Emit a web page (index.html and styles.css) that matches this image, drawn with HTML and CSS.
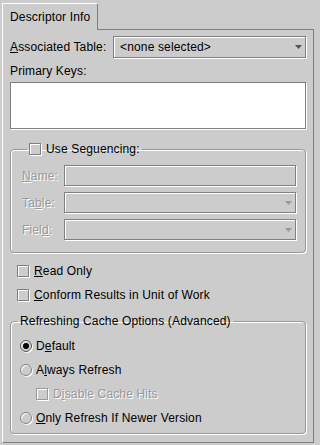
FILE: index.html
```html
<!DOCTYPE html>
<html>
<head>
<meta charset="utf-8">
<title>Descriptor Info</title>
<link rel="stylesheet" href="styles.css">
</head>
<body>
<div class="window">
  <div class="tabrow">
    <div class="tab">Descriptor Info</div>
    <div class="tabfill"></div>
  </div>
  <div class="panel">
    <div class="assoc">
      <span class="lbl"><u>A</u>ssociated Table:</span>
      <div class="combo">
        <span class="combo-text">&lt;none selected&gt;</span>
        <svg class="arrow" width="7" height="4" viewBox="0 0 7 4"><polygon points="0,0 7,0 3.5,4"/></svg>
      </div>
    </div>
    <div class="pk-label">Primary Keys:</div>
    <div class="textarea"></div>

    <fieldset class="group seq">
      <legend><span class="legend-inner"><span class="cb"></span><span>Use Seguencing:</span></span></legend>
      <div class="frow"><span class="dlbl"><u>N</u>ame:</span><div class="field"></div></div>
      <div class="frow"><span class="dlbl">Ta<u>b</u>le:</span><div class="field"><svg class="arrow dis" width="7" height="4" viewBox="0 0 7 4"><polygon points="0,0 7,0 3.5,4"/></svg></div></div>
      <div class="frow"><span class="dlbl">Fiel<u>d</u>:</span><div class="field"><svg class="arrow dis" width="7" height="4" viewBox="0 0 7 4"><polygon points="0,0 7,0 3.5,4"/></svg></div></div>
    </fieldset>

    <div class="crow first"><span class="cb"></span><span><u>R</u>ead Only</span></div>
    <div class="crow"><span class="cb"></span><span><u>C</u>onform Results in Unit of Work</span></div>

    <fieldset class="group refresh">
      <legend>Refreshing Cache Options (Advanced)</legend>
      <div class="rrow"><span class="radio on"></span><span>D<u>e</u>fault</span></div>
      <div class="rrow"><span class="radio"></span><span>A<u>l</u>ways Refresh</span></div>
      <div class="crow sub"><span class="cb dis"></span><span class="dtext">D<u>i</u>sable Cache Hits</span></div>
      <div class="rrow"><span class="radio"></span><span><u>O</u>nly Refresh If Newer Version</span></div>
    </fieldset>
  </div>
</div>
</body>
</html>
```

FILE: styles.css
```css
* { box-sizing: border-box; }
html, body { margin: 0; padding: 0; background: #cccccc; }
body {
  font-family: "Liberation Sans", Arial, sans-serif;
  font-size: 12px;
  line-height: 14px;
  letter-spacing: 0.15px;
  color: #000;
  width: 316px;
  height: 445px;
  overflow: hidden;
}
u { text-decoration: underline; text-underline-offset: 1px; }

.tabrow { display: flex; height: 30px; margin-left: 2px; width: 312px; }
.tab {
  margin-top: 3px;
  height: 27px;
  width: 96px;
  padding: 6px 0 0 7px;
  border-left: 1px solid #fff;
  border-top: 1px solid #fff;
  border-right: 1px solid #808080;
  border-top-right-radius: 3px;
  white-space: nowrap;
}
.tabfill { flex: 1; border-bottom: 1px solid #808080; border-right: 1px solid #808080; margin-top: 29px; height: 1px; }

.panel {
  margin-left: 2px;
  width: 312px;
  height: 413px;
  border-left: 1px solid #fff;
  border-right: 1px solid #808080;
  border-bottom: 1px solid #808080;
  padding: 6px 7px 0 7px;
}

.assoc { display: flex; align-items: center; height: 22px; }
.combo {
  margin-left: auto;
  width: 193px;
  height: 22px;
  display: flex;
  align-items: center;
  padding: 0 3px 0 6px;
  border: 1px solid #808080;
  box-shadow: 1px 1px 0 #fff, inset 1px 1px 0 #fff;
}
.combo-text { flex: 1; }
.arrow { display: block; fill: #555; flex: none; margin-left: auto; }
.arrow.dis { fill: #999; }

.pk-label { margin-top: 6px; }
.textarea {
  margin-top: 4px;
  height: 47px;
  background: #fff;
  border: 1px solid #808080;
  box-shadow: 1px 1px 0 #fff;
}

fieldset.group {
  margin: 13px 0 0;
  border: 1px solid #999;
  border-radius: 4px;
  box-shadow: 1px 1px 0 #fff, inset 1px 1px 0 #fff;
  min-width: 0;
}
fieldset.seq { padding: 9px 9px 12px 11px; }
fieldset.seq legend { margin-left: 5px; padding: 0 2px; height: 14px; line-height: 14px; }
.legend-inner { display: flex; align-items: center; gap: 5px; height: 14px; }

.frow { display: flex; align-items: center; height: 21px; }
.frow + .frow { margin-top: 6px; }
.dlbl { color: #999; text-shadow: 1px 1px 0 #fff; }
.field {
  margin-left: auto;
  width: 232px;
  height: 21px;
  display: flex;
  align-items: center;
  padding: 0 3px 0 5px;
  border: 1px solid #808080;
  box-shadow: 1px 1px 0 #fff, inset 1px 1px 0 #fff;
}

.cb {
  flex: none;
  width: 12px;
  height: 12px;
  border: 1px solid #808080;
  box-shadow: 1px 1px 0 #fff, inset 1px 1px 0 #fff;
  background: #ccc;
}
.cb.dis { border-color: #999; }
.dtext { color: #999; text-shadow: 1px 1px 0 #fff; }

.crow { display: flex; align-items: center; gap: 5px; height: 24px; padding-left: 7px; }
.crow.first { margin-top: 6px; }
.crow.sub { padding-left: 25px; }

fieldset.refresh { margin-top: 7px; padding: 6px 0 3px 0; }
fieldset.refresh legend { margin-left: 6px; padding: 0 3px; height: 14px; line-height: 14px; }

.rrow { display: flex; align-items: center; gap: 4px; height: 24px; padding-left: 9px; }
.radio {
  flex: none;
  width: 12px;
  height: 12px;
  border-radius: 50%;
  border: 1px solid #808080;
  box-shadow: 1px 1px 0 #fff, inset 1px 1px 0 #fff;
  background: #ccc;
  display: flex;
  align-items: center;
  justify-content: center;
}
.radio.on { border-color: #555; }
.radio.on::after { content: ""; width: 6px; height: 6px; border-radius: 50%; background: #000; }
```
